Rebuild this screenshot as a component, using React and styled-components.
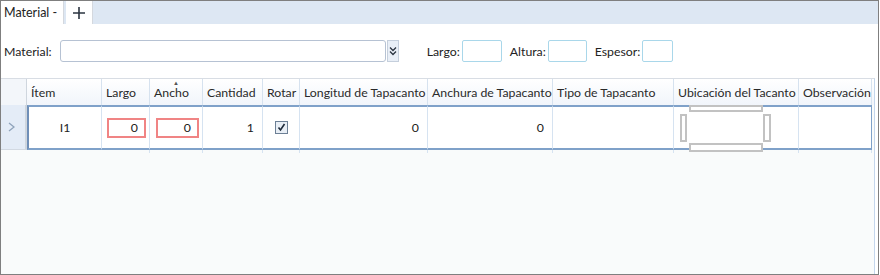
import React from "react"
import styled, { createGlobalStyle } from "styled-components"

const GlobalStyle = createGlobalStyle`
  body {
    margin: 0;
    background: #ffffff;
    font-family: "Segoe UI", Lato, "Liberation Sans", sans-serif;
    font-size: 12.3px;
    color: #1e1e1e;
  }
`

const COLS = "26px 75px 48px 53px 60px 37px 128px 125px 121px 125px 73px"

const Frame = styled.div`
  width: 879px;
  height: 275px;
  box-sizing: border-box;
  border: 1px solid #7f7f7f;
  display: flex;
  flex-direction: column;
  background: #ffffff;
`

const TabStrip = styled.div`
  height: 23px;
  background: #dde7f3;
  display: flex;
  align-items: stretch;
  gap: 2px;
  flex-shrink: 0;
`

const Tab = styled.div`
  background: #ffffff;
  border-right: 1px solid #d4d8de;
  display: flex;
  align-items: center;
  padding: ${p => (p.icon ? "0 6px" : "0 6px 0 3px")};
  width: ${p => (p.icon ? "14px" : "auto")};
  min-width: ${p => (p.icon ? "14px" : "53px")};
  font-size: 12.5px;
  color: #222;
`

const Toolbar = styled.div`
  display: flex;
  align-items: center;
  height: 24px;
  margin-top: 15px;
  padding-left: 3px;
`

const Label = styled.span`
  font-size: 12.3px;
  color: #222;
  margin-right: ${p => p.gap || 2}px;
`

const ComboBox = styled.div`
  width: 326px;
  height: 22px;
  border: 1px solid #b6c2d3;
  border-radius: 3px;
  box-sizing: border-box;
  background: #fff;
`

const ComboButton = styled.div`
  width: 12px;
  height: 22px;
  margin-left: 1px;
  box-sizing: border-box;
  border: 1px solid #c5cfdc;
  background: #e9eff7;
  display: flex;
  align-items: center;
  justify-content: center;
  margin-right: 28px;
`

const SmallInput = styled.div`
  width: ${p => p.w}px;
  height: 22px;
  box-sizing: border-box;
  border: 1px solid #a9d7ea;
  border-radius: 2px;
  background: #fff;
  margin-right: 8px;
`

const Grid = styled.div`
  margin-top: 15px;
  flex: 1;
  background: #f9fbfb;
  border-top: 1px solid #d8dde4;
  border-right: 1px solid #c4d6ec;
  margin-right: 3px;
`

const HeaderRow = styled.div`
  display: grid;
  grid-template-columns: ${COLS};
  height: 26px;
  background: linear-gradient(#ffffff, #f1f5fb);
`

const HeaderCell = styled.div`
  position: relative;
  border-right: 1px solid ${p => (p.corner ? "#cfd6de" : "#d6e2ef")};
  display: flex;
  align-items: center;
  padding-left: 4px;
  padding-top: 1px;
  white-space: nowrap;
  overflow: hidden;
  color: #2a2a2a;
  background: ${p => (p.corner ? "#f3f6fa" : "transparent")};
`

const SortArrow = styled.span`
  position: absolute;
  top: 0px;
  left: 23px;
  font-size: 6px;
  color: #555;
`

const DataRow = styled.div`
  display: grid;
  grid-template-columns: ${COLS};
  height: 45px;
`

const RowHead = styled.div`
  background: #e4ecf7;
  border-right: 2px solid #cfd6de;
  border-bottom: 1px solid #d2d9e2;
  display: flex;
  align-items: center;
  justify-content: center;
  padding-right: 4px;
`

const Cell = styled.div`
  background: #ffffff;
  border-top: 2px solid #7fa1c9;
  border-bottom: 2px solid #7fa1c9;
  border-right: 1px solid ${p => (p.last ? "#7fa1c9" : "#d6e3f1")};
  border-left: ${p => (p.first ? "2px solid #6f8fb8" : "none")};
  display: flex;
  align-items: center;
  justify-content: ${p => p.align || "flex-end"};
  padding: 0 ${p => p.pad ?? 8}px 0 ${p => p.lpad ?? p.pad ?? 8}px;
  position: relative;
  color: #222;
`

const EditBox = styled.div`
  width: 100%;
  height: 20px;
  box-sizing: border-box;
  border: 2px solid #f08484;
  display: flex;
  align-items: center;
  justify-content: flex-end;
  padding-right: 6px;
`

const Check = styled.div`
  width: 11px;
  height: 11px;
  border: 1px solid #6c7f95;
  background: #e8eef5;
  display: flex;
  align-items: center;
  justify-content: center;
`

const EdgeBar = styled.div`
  position: absolute;
  box-sizing: border-box;
  border: 2px solid #c2c2c2;
  background: #fff;
  left: ${p => p.x}px;
  top: ${p => p.y}px;
  width: ${p => p.w}px;
  height: ${p => p.h}px;
`

const Tail = styled.div`
  display: grid;
  grid-template-columns: ${COLS};
  height: 3px;
`

const TailCell = styled.div`
  border-right: 1px solid ${p => (p.blank ? "transparent" : "#d6e3f1")};
`

const headers = [
  "Ítem",
  "Largo",
  "Ancho",
  "Cantidad",
  "Rotar",
  "Longitud de Tapacanto",
  "Anchura de Tapacanto",
  "Tipo de Tapacanto",
  "Ubicación del Tacanto",
  "Observación",
]

const App = () => (
  <>
    <GlobalStyle />
    <Frame>
      <TabStrip>
        <Tab>Material -</Tab>
        <Tab icon>
          <svg width="14" height="14" viewBox="0 0 14 14">
            <path d="M7 1v12M1 7h12" stroke="#2b3440" strokeWidth="1.6" />
          </svg>
        </Tab>
      </TabStrip>
      <Toolbar>
        <Label gap={8}>Material:</Label>
        <ComboBox />
        <ComboButton>
          <svg width="8" height="10" viewBox="0 0 8 10">
            <path
              d="M1 1.5l3 3 3-3M1 5.5l3 3 3-3"
              stroke="#2b3440"
              strokeWidth="1.3"
              fill="none"
            />
          </svg>
        </ComboButton>
        <Label>Largo:</Label>
        <SmallInput w={40} />
        <Label>Altura:</Label>
        <SmallInput w={39} />
        <Label>Espesor:</Label>
        <SmallInput w={31} />
      </Toolbar>
      <Grid>
        <HeaderRow>
          <HeaderCell corner />
          {headers.map(h => (
            <HeaderCell key={h}>
              {h === "Ancho" && <SortArrow>▲</SortArrow>}
              {h}
            </HeaderCell>
          ))}
        </HeaderRow>
        <DataRow>
          <RowHead>
            <svg width="7" height="10" viewBox="0 0 7 10">
              <path
                d="M1 1l5 4-5 4"
                stroke="#8fa3bb"
                strokeWidth="1.3"
                fill="none"
              />
            </svg>
          </RowHead>
          <Cell first align="center">
            I1
          </Cell>
          <Cell lpad={5} pad={3}>
            <EditBox>0</EditBox>
          </Cell>
          <Cell lpad={6} pad={3}>
            <EditBox>0</EditBox>
          </Cell>
          <Cell>1</Cell>
          <Cell align="center" pad={0}>
            <Check>
              <svg width="9" height="9" viewBox="0 0 9 9">
                <path
                  d="M1.5 4.5l2 2.5 4-6"
                  stroke="#1d2a3a"
                  strokeWidth="1.6"
                  fill="none"
                />
              </svg>
            </Check>
          </Cell>
          <Cell>0</Cell>
          <Cell>0</Cell>
          <Cell />
          <Cell>
            <EdgeBar x={15} y={-2} w={74} h={7} />
            <EdgeBar x={6} y={7} w={7} h={28} />
            <EdgeBar x={89} y={7} w={8} h={28} />
            <EdgeBar x={15} y={36} w={74} h={9} />
          </Cell>
          <Cell last />
        </DataRow>
        <Tail>
          <TailCell blank />
          <TailCell blank />
          <TailCell />
          <TailCell />
          <TailCell />
          <TailCell />
          <TailCell />
          <TailCell />
          <TailCell />
          <TailCell />
          <TailCell />
        </Tail>
      </Grid>
    </Frame>
  </>
)

export default App
